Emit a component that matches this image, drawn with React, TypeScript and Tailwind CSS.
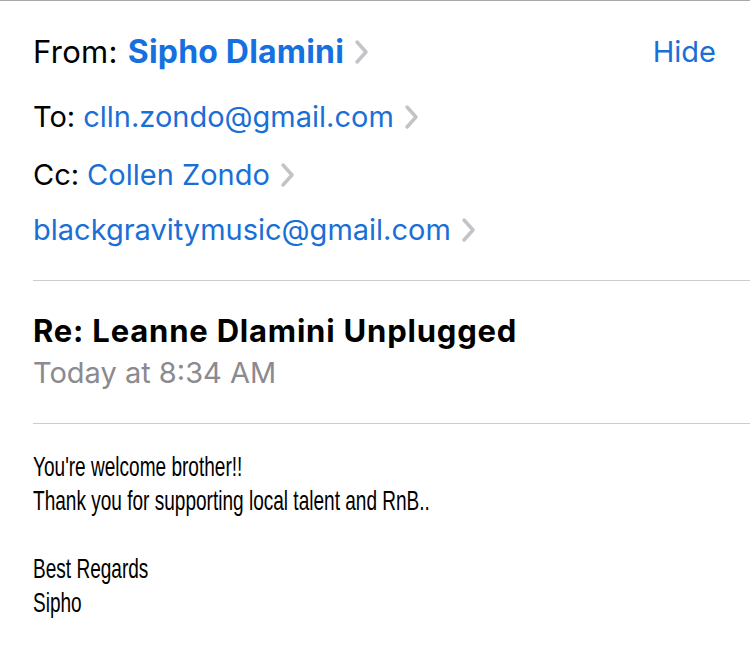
import React from 'react';

const blue = 'text-[#1a6fd6]';

const Chevron = () => (
  <svg width="15" height="26" viewBox="0 0 15 26" className="ml-[10px] shrink-0">
    <polyline
      points="3,3 12,13 3,23"
      fill="none"
      stroke="#c4c4c8"
      strokeWidth="3.5"
      strokeLinecap="round"
      strokeLinejoin="round"
    />
  </svg>
);

const HeaderRow = ({ label, value, className }: { label?: string; value: string; className?: string }) => (
  <div className={`flex items-center h-[40px] text-[29px] ${className || ''}`}>
    {label && <span className="text-black mr-[8px]">{label}</span>}
    <span className={blue}>{value}</span>
    <Chevron />
  </div>
);

const App = () => {
  return (
    <div className="w-[750px] h-[645px] bg-white overflow-hidden border-t border-[#a9a9a9] font-['Inter','Liberation_Sans',sans-serif]">
      <div className="pl-[33px]">
        <div className="flex items-center h-[40px] mt-[31px] pr-[34px]">
          <div className="flex items-center">
            <span className="text-black text-[31px] tracking-[0.3px] mr-[10px]">From:</span>
            <span className="text-[#1670e0] text-[32px] font-bold tracking-[0.2px]">Sipho Dlamini</span>
            <Chevron />
          </div>
          <span className={`ml-auto text-[29px] ${blue}`}>Hide</span>
        </div>
        <HeaderRow label="To:" value="clln.zondo@gmail.com" className="mt-[25px]" />
        <HeaderRow label="Cc:" value="Collen Zondo" className="mt-[18px]" />
        <HeaderRow value="blackgravitymusic@gmail.com" className="mt-[15px]" />

        <div className="mt-[30px] border-t border-[#cdcdcd]">
          <div className="mt-[30px] h-[40px] flex items-center text-[31px] font-bold tracking-[0.8px] text-black">
            Re: Leanne Dlamini Unplugged
          </div>
          <div className="mt-[2px] h-[40px] flex items-center text-[29px] text-[#8a8a8f]">
            Today at 8:34 AM
          </div>
        </div>

        <div className="mt-[30px] border-t border-[#cdcdcd]">
          <div className="pt-[26px] text-[28px] leading-[34px] text-black whitespace-nowrap origin-left scale-x-[0.68] font-['Liberation_Sans',Arial,sans-serif]">
            <div>You're welcome brother!!</div>
            <div>Thank you for supporting local talent and RnB..</div>
            <div className="h-[34px]" />
            <div>Best Regards</div>
            <div>Sipho</div>
          </div>
        </div>
      </div>
    </div>
  );
};

export default App;
